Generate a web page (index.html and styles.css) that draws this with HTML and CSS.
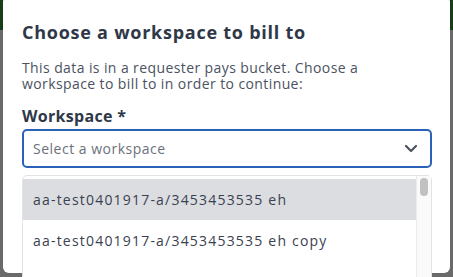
FILE: index.html
```html
<!DOCTYPE html>
<html>
<head>
<meta charset="utf-8">
<link rel="stylesheet" href="styles.css">
</head>
<body>
<div class="modal">
  <h1 class="title">Choose a workspace to bill to</h1>
  <p class="desc">This data is in a requester pays bucket. Choose a workspace to bill to in order to continue:</p>
  <div class="label">Workspace *</div>
  <div class="select">
    <span class="placeholder">Select a workspace</span>
    <svg class="chevron" width="14" height="9" viewBox="0 0 14 9"><path d="M2 2 L7 7 L12 2" fill="none" stroke="#4b5260" stroke-width="2.2" stroke-linecap="round" stroke-linejoin="round"/></svg>
  </div>
  <div class="menu">
    <div class="options">
      <div class="option active">aa-test0401917-a/3453453535 eh</div>
      <div class="option">aa-test0401917-a/3453453535 eh copy</div>
      <div class="option"></div>
    </div>
    <div class="scrollbar"><div class="thumb"></div></div>
  </div>
</div>
</body>
</html>
```
FILE: styles.css
```css
html, body {
  margin: 0;
  padding: 0;
}
body {
  width: 453px;
  height: 277px;
  overflow: hidden;
  background: linear-gradient(to bottom, #173f17 0, #173f17 30px, #6a6a6a 30px, #6a6a6a 100%);
  font-family: "Open Sans", "Liberation Sans", sans-serif;
}
.modal {
  margin: -4px 3px 0 3px;
  height: 277px;
  box-sizing: border-box;
  background: #fff;
  border-radius: 6px;
  padding: 24px 18px 0 19px;
}
.title {
  margin: 0;
  font-size: 18px;
  line-height: 24px;
  font-weight: 700;
  color: #2e3848;
  letter-spacing: 0.75px;
}
.desc {
  margin: 16px 0 0 0;
  font-size: 14px;
  line-height: 16px;
  color: #4b5261;
  width: 360px;
  letter-spacing: 0.4px;
}
.label {
  margin-top: 13px;
  font-size: 16px;
  line-height: 22px;
  font-weight: 700;
  color: #2e3848;
  letter-spacing: 0.3px;
}
.select {
  margin-top: 2px;
  height: 39px;
  box-sizing: border-box;
  border: 2px solid #2962b8;
  border-radius: 5px;
  display: flex;
  align-items: center;
  justify-content: space-between;
  padding: 0 12px 0 9px;
}
.placeholder {
  font-size: 14px;
  color: #6b717c;
  letter-spacing: 0.5px;
}
.chevron {
  display: block;
}
.menu {
  margin-top: 7px;
  border: 1px solid #e2e3e6;
  border-radius: 5px;
  background: #fff;
  display: flex;
  padding: 3px 0;
  height: 120px;
}
.options {
  flex: 1;
}
.option {
  height: 41px;
  line-height: 41px;
  padding-left: 10px;
  font-size: 14px;
  color: #3a4150;
  letter-spacing: 1.2px;
}
.option.active {
  background: #dcdde1;
}
.scrollbar {
  width: 14px;
  border-left: 1px solid #ececec;
  background: #fafafa;
  margin-top: -3px;
}
.thumb {
  width: 8px;
  height: 18px;
  margin: 2px 0 0 3px;
  border-radius: 4px;
  background: #c1c1c1;
}
```
